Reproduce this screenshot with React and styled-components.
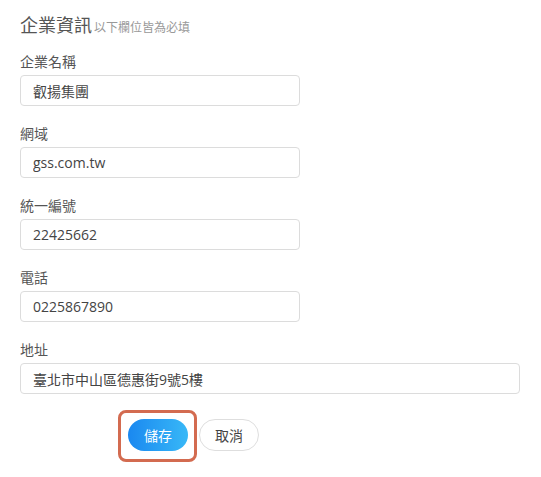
import React, { useState } from 'react';
import styled, { createGlobalStyle } from 'styled-components';

const GlobalStyle = createGlobalStyle`
  body {
    margin: 0;
    background: #fff;
    font-family: "Open Sans", "Noto Sans CJK TC", sans-serif;
  }
  * { box-sizing: border-box; }
`;

const fields = [
  { key: 'name', label: '企業名稱', value: '叡揚集團' },
  { key: 'domain', label: '網域', value: 'gss.com.tw' },
  { key: 'taxId', label: '統一編號', value: '22425662' },
  { key: 'phone', label: '電話', value: '0225867890' },
  { key: 'address', label: '地址', value: '臺北市中山區德惠街9號5樓', wide: true },
];

const App = () => {
  const [values, setValues] = useState(
    Object.fromEntries(fields.map((f) => [f.key, f.value]))
  );

  const handleChange = (key) => (e) => {
    setValues({ ...values, [key]: e.target.value });
  };

  return (
    <>
      <GlobalStyle />
      <Form onSubmit={(e) => e.preventDefault()}>
        <Header>
          <Title>企業資訊</Title>
          <Hint>以下欄位皆為必填</Hint>
        </Header>
        {fields.map((f) => (
          <Field key={f.key}>
            <Label htmlFor={f.key}>{f.label}</Label>
            <Input
              id={f.key}
              wide={f.wide}
              value={values[f.key]}
              onChange={handleChange(f.key)}
            />
          </Field>
        ))}
        <Actions>
          <Highlight>
            <SaveButton type="submit">儲存</SaveButton>
          </Highlight>
          <CancelButton type="button">取消</CancelButton>
        </Actions>
      </Form>
    </>
  );
};

const Form = styled.form`
  display: flex;
  flex-direction: column;
  padding: 13px 20px 26px 20px;
  min-height: 477px;
`;

const Header = styled.div`
  display: flex;
  align-items: baseline;
  gap: 2px;
  margin-bottom: 15px;
`;

const Title = styled.h2`
  margin: 0;
  font-size: 18px;
  line-height: 24px;
  font-weight: 400;
  color: #555;
`;

const Hint = styled.span`
  font-size: 12px;
  color: #999;
`;

const Field = styled.div`
  display: flex;
  flex-direction: column;
  margin-bottom: 18px;
`;

const Label = styled.label`
  font-size: 14px;
  line-height: 20px;
  color: #555;
  margin-bottom: 3px;
`;

const Input = styled.input.withConfig({
  shouldForwardProp: (prop) => prop !== 'wide',
})`
  width: ${(props) => (props.wide ? '500px' : '280px')};
  height: 31px;
  padding: 0 12px;
  border: 1px solid #dcdcdc;
  border-radius: 4px;
  font-family: "Open Sans", "Noto Sans CJK TC", sans-serif;
  font-size: 14px;
  color: #444;
  outline: none;

  &:focus {
    border-color: #2ea6f5;
  }
`;

const Actions = styled.div`
  display: flex;
  align-items: center;
  gap: 11px;
  padding-left: 108px;
  margin-top: 7px;
`;

const Highlight = styled.span`
  position: relative;
  display: inline-flex;

  &::after {
    content: '';
    position: absolute;
    top: -9px;
    bottom: -11px;
    left: -10px;
    right: -9px;
    border: 3px solid #d36b50;
    border-radius: 8px;
    pointer-events: none;
  }
`;

const BaseButton = styled.button`
  height: 32px;
  min-width: 60px;
  padding: 0 14px;
  border-radius: 16px;
  font-family: "Open Sans", "Noto Sans CJK TC", sans-serif;
  font-size: 14px;
  cursor: pointer;
`;

const SaveButton = styled(BaseButton)`
  border: none;
  color: #fff;
  background: linear-gradient(90deg, #1a88f0, #38b8f7);
`;

const CancelButton = styled(BaseButton)`
  border: 1px solid #dedede;
  background: #fff;
  color: #444;
`;

export default App;
